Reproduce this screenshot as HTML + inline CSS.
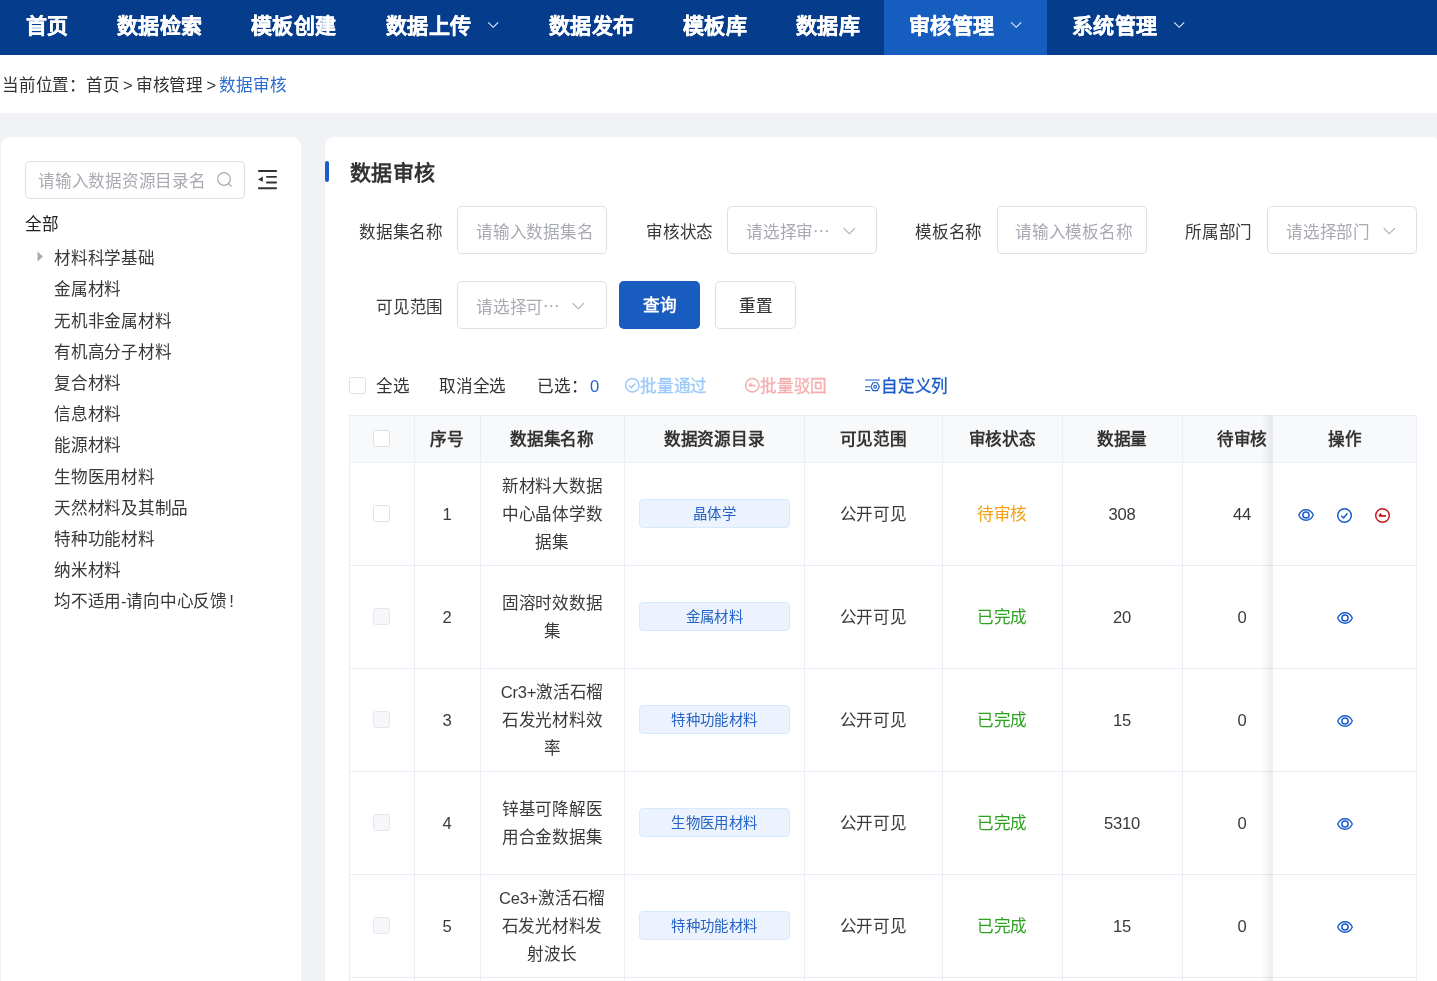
<!DOCTYPE html>
<html lang="zh-CN">
<head>
<meta charset="utf-8">
<style>
*{box-sizing:border-box;margin:0;padding:0}
html,body{width:1437px;height:981px;overflow:hidden}
body{position:relative;background:#f0f2f5;font-family:"Liberation Sans",sans-serif;color:#333;letter-spacing:-0.25px}
.a{position:absolute;white-space:nowrap}
.nav{position:absolute;left:0;top:0;width:1437px;height:55px;background:#063c8c}
.it{position:absolute;top:0;height:55px;line-height:52px;color:#fff;font-size:21px;font-weight:bold;white-space:nowrap;letter-spacing:0.4px;-webkit-text-stroke:0.35px #fff}
.crumb{position:absolute;left:0;top:55px;width:1437px;height:58px;background:#fff}
.panel{position:absolute;background:#fff;border-radius:9px}
.t{font-size:16.6px;line-height:30px}
.tree{color:#383838}
.inp{position:absolute;border:1px solid #dcdfe6;border-radius:4.8px;background:#fff}
.ph{color:#a8abb2}
.lbl{color:#383838}
.btn{position:absolute;border-radius:4.8px;font-size:16.6px;font-weight:bold;text-align:center;line-height:50px}
.vl{position:absolute;width:1px;background:#ebeef5}
.hl{position:absolute;height:1px;background:#ebeef5}
.cell{position:absolute;text-align:center;font-size:16.6px;color:#3a3a3a;display:flex;align-items:center;justify-content:center;padding-top:2.6px;line-height:27.8px}
.hcell{position:absolute;text-align:center;font-size:16.6px;color:#333;font-weight:bold;line-height:49px;white-space:nowrap}
.tag{position:absolute;left:639px;width:151px;height:29px;border:1px solid #d9e9fc;background:#ecf3fe;border-radius:4px;color:#2563c4;font-size:14.4px;line-height:28px;text-align:center;white-space:nowrap;letter-spacing:0.4px}
.cb{position:absolute;width:16.8px;height:16.8px;border:1px solid #dcdfe6;border-radius:2.4px;background:#fff}
.cbd{background:#f5f7fa;border-color:#e4e7ed}
.a,.it,.btn,.cell,.hcell,.tag{will-change:transform}
</style>
</head>
<body>
<div class="nav"></div>
<div class="a" style="left:884px;top:0;width:163px;height:55px;background:#165dc0"></div>
<div class="it" style="left:25.5px">首页</div>
<div class="it" style="left:116.5px">数据检索</div>
<div class="it" style="left:250.5px">模板创建</div>
<div class="it" style="left:385.5px">数据上传</div>
<div class="it" style="left:548.5px">数据发布</div>
<div class="it" style="left:682.5px">模板库</div>
<div class="it" style="left:795.5px">数据库</div>
<div class="it" style="left:908.5px">审核管理</div>
<div class="it" style="left:1071.5px">系统管理</div>
<svg class="a" style="left:487px;top:21px" width="13" height="9" viewBox="0 0 13 9"><path d="M1.2 1.3 L6.2 6.3 L11.2 1.3" fill="none" stroke="#fff" stroke-opacity="0.9" stroke-width="1.15"/></svg>
<svg class="a" style="left:1010px;top:21px" width="13" height="9" viewBox="0 0 13 9"><path d="M1.2 1.3 L6.2 6.3 L11.2 1.3" fill="none" stroke="#fff" stroke-opacity="0.9" stroke-width="1.15"/></svg>
<svg class="a" style="left:1173px;top:21px" width="13" height="9" viewBox="0 0 13 9"><path d="M1.2 1.3 L6.2 6.3 L11.2 1.3" fill="none" stroke="#fff" stroke-opacity="0.9" stroke-width="1.15"/></svg>
<div class="crumb"></div>
<div class="a t" style="left:2px;top:71px;color:#333">当前位置：首页<span style="letter-spacing:-0.8px"> &gt; </span>审核管理<span style="letter-spacing:-0.8px"> &gt; </span><span style="color:#2a6bd0">数据审核</span></div>
<div class="panel" style="left:1px;top:137px;width:300px;height:900px"></div>
<div class="inp" style="left:25px;top:161px;width:220px;height:38px"></div>
<div class="a t ph" style="left:38px;top:167px">请输入数据资源目录名</div>
<svg class="a" style="left:216px;top:171px" width="17" height="17" viewBox="0 0 17 17"><circle cx="8" cy="8" r="6.3" fill="none" stroke="#a8abb2" stroke-width="1.2"/><path d="M12.5 12.5 L15.5 15.5" stroke="#a8abb2" stroke-width="1.2"/></svg>
<svg class="a" style="left:258px;top:169px" width="20" height="21" viewBox="0 0 20 21"><g fill="#333"><rect x="0" y="1" width="19" height="2" rx="0.8"/><rect x="8" y="6.9" width="11" height="1.8" rx="0.8"/><rect x="8" y="12.6" width="11" height="1.8" rx="0.8"/><rect x="0" y="18.2" width="19" height="2" rx="0.8"/><path d="M0 10.5 L4.8 7.6 L4.8 12.8 Z"/></g></svg>
<div class="a t" style="left:25px;top:210px;color:#222">全部</div>
<svg class="a" style="left:37px;top:251px" width="7" height="11" viewBox="0 0 7 11"><path d="M0.5 0.5 L6 5.5 L0.5 10.5 Z" fill="#a8abb2"/></svg>
<div class="a t tree" style="left:54px;top:244.2px">材料科学基础</div>
<div class="a t tree" style="left:54px;top:275.4px">金属材料</div>
<div class="a t tree" style="left:54px;top:306.6px">无机非金属材料</div>
<div class="a t tree" style="left:54px;top:337.8px">有机高分子材料</div>
<div class="a t tree" style="left:54px;top:369.0px">复合材料</div>
<div class="a t tree" style="left:54px;top:400.2px">信息材料</div>
<div class="a t tree" style="left:54px;top:431.4px">能源材料</div>
<div class="a t tree" style="left:54px;top:462.6px">生物医用材料</div>
<div class="a t tree" style="left:54px;top:493.8px">天然材料及其制品</div>
<div class="a t tree" style="left:54px;top:525.0px">特种功能材料</div>
<div class="a t tree" style="left:54px;top:556.2px">纳米材料</div>
<div class="a t tree" style="left:54px;top:587.4px">均不适用-请向中心反馈<span style="margin-left:2.5px">!</span></div>
<div class="panel" style="left:325px;top:137px;width:1115px;height:900px"></div>
<div class="a" style="left:325px;top:161px;width:4px;height:21px;background:#1a5cc8;border-radius:2px"></div>
<div class="a" style="left:350px;top:158px;font-size:21px;line-height:30px;font-weight:bold;color:#333;letter-spacing:0.45px">数据审核</div>
<div class="a t lbl" style="left:359px;top:217.5px">数据集名称</div>
<div class="inp" style="left:457px;top:206px;width:150px;height:48px"></div>
<div class="a t ph" style="left:476px;top:217.5px">请输入数据集名</div>
<div class="a t lbl" style="left:646px;top:217.5px">审核状态</div>
<div class="inp" style="left:727px;top:206px;width:150px;height:48px"></div>
<div class="a t ph" style="left:746px;top:217.5px">请选择审⋯</div>
<svg class="a" style="left:843px;top:227px" width="13" height="9" viewBox="0 0 13 9"><path d="M0.7 1.2 L6.3 6.8 L11.9 1.2" fill="none" stroke="#a8abb2" stroke-width="1.1"/></svg>
<div class="a t lbl" style="left:915px;top:217.5px">模板名称</div>
<div class="inp" style="left:997px;top:206px;width:150px;height:48px"></div>
<div class="a t ph" style="left:1015px;top:217.5px">请输入模板名称</div>
<div class="a t lbl" style="left:1185px;top:217.5px">所属部门</div>
<div class="inp" style="left:1267px;top:206px;width:150px;height:48px"></div>
<div class="a t ph" style="left:1286px;top:217.5px">请选择部门</div>
<svg class="a" style="left:1383px;top:227px" width="13" height="9" viewBox="0 0 13 9"><path d="M0.7 1.2 L6.3 6.8 L11.9 1.2" fill="none" stroke="#a8abb2" stroke-width="1.1"/></svg>
<div class="a t lbl" style="left:376px;top:292.5px">可见范围</div>
<div class="inp" style="left:457px;top:281px;width:150px;height:48px"></div>
<div class="a t ph" style="left:476px;top:292.5px">请选择可⋯</div>
<svg class="a" style="left:572px;top:302px" width="13" height="9" viewBox="0 0 13 9"><path d="M0.7 1.2 L6.3 6.8 L11.9 1.2" fill="none" stroke="#a8abb2" stroke-width="1.1"/></svg>
<div class="btn" style="left:619px;top:281px;width:81px;height:48px;background:#185cc0;color:#fff">查询</div>
<div class="btn" style="left:715px;top:281px;width:81px;height:48px;border:1px solid #dcdfe6;color:#333;background:#fff;font-weight:400;-webkit-text-stroke:0.2px #333">重置</div>
<div class="cb" style="left:349px;top:377px"></div>
<div class="a t" style="left:376px;top:372px;color:#333">全选</div>
<div class="a t" style="left:439px;top:372px;color:#333">取消全选</div>
<div class="a t" style="left:537px;top:372px;color:#333">已选：</div>
<div class="a t" style="left:590px;top:372px;color:#2563c4">0</div>
<svg class="a" style="left:624px;top:377px" width="17" height="17" viewBox="0 0 17 17"><circle cx="8.3" cy="8.3" r="6.7" fill="none" stroke="#9ccafa" stroke-width="1.5"/><path d="M5 8.5 L7.3 10.6 L11.3 6.4" fill="none" stroke="#9ccafa" stroke-width="1.5"/></svg>
<div class="a t" style="left:640px;top:372px;color:#9ccafa;-webkit-text-stroke:0.3px #9ccafa">批量通过</div>
<svg class="a" style="left:744px;top:377px" width="17" height="17" viewBox="0 0 17 17"><circle cx="8.3" cy="8.3" r="6.7" fill="none" stroke="#f4aeb0" stroke-width="1.5"/><path d="M4.9 8.7 L11.4 8.7 M5 8.7 L7.4 6.3" fill="none" stroke="#f4aeb0" stroke-width="1.8"/></svg>
<div class="a t" style="left:760px;top:372px;color:#f4aeb0;-webkit-text-stroke:0.3px #f4aeb0">批量驳回</div>
<svg class="a" style="left:864px;top:378px" width="17" height="15" viewBox="0 0 17 15"><g fill="none" stroke="#1a5cc8" stroke-width="1.1"><path d="M1 2 H15.7 M1 8.7 H6 M1 12.5 H6"/><path d="M6.9 8.7 L9 4.8 H13.3 L15.4 8.7 L13.3 12.6 H9 Z"/><circle cx="11.15" cy="8.7" r="1.4"/></g></svg>
<div class="a t" style="left:881px;top:372px;color:#1a5cc8;-webkit-text-stroke:0.3px #1a5cc8">自定义列</div>
<div class="a" style="left:349px;top:415px;width:1068px;height:47px;background:#f8f9fb"></div>
<div class="hcell" style="left:414px;top:415px;width:66px;height:47px">序号</div>
<div class="hcell" style="left:480px;top:415px;width:144px;height:47px">数据集名称</div>
<div class="hcell" style="left:624px;top:415px;width:180px;height:47px">数据资源目录</div>
<div class="hcell" style="left:804px;top:415px;width:138px;height:47px">可见范围</div>
<div class="hcell" style="left:942px;top:415px;width:120px;height:47px">审核状态</div>
<div class="hcell" style="left:1062px;top:415px;width:120px;height:47px">数据量</div>
<div class="hcell" style="left:1182px;top:415px;width:120px;height:47px">待审核</div>
<div class="cb" style="left:373px;top:430px"></div>
<div class="cb" style="left:373px;top:505.1px"></div>
<div class="cell" style="left:414px;top:462px;width:66px;height:103px;"><div>1</div></div>
<div class="cell" style="left:480px;top:462px;width:144px;height:103px;line-height:27.8px"><div>新材料大数据<br>中心晶体学数<br>据集</div></div>
<div class="tag" style="top:499.0px">晶体学</div>
<div class="cell" style="left:804px;top:462px;width:138px;height:103px;"><div>公开可见</div></div>
<div class="cell" style="left:942px;top:462px;width:120px;height:103px;color:#f4a012"><div>待审核</div></div>
<div class="cell" style="left:1062px;top:462px;width:120px;height:103px;"><div>308</div></div>
<div class="cell" style="left:1182px;top:462px;width:120px;height:103px;"><div>44</div></div>
<div class="cb cbd" style="left:373px;top:608.1px"></div>
<div class="cell" style="left:414px;top:565px;width:66px;height:103px;"><div>2</div></div>
<div class="cell" style="left:480px;top:565px;width:144px;height:103px;line-height:27.8px"><div>固溶时效数据<br>集</div></div>
<div class="tag" style="top:602.0px">金属材料</div>
<div class="cell" style="left:804px;top:565px;width:138px;height:103px;"><div>公开可见</div></div>
<div class="cell" style="left:942px;top:565px;width:120px;height:103px;color:#2ea121"><div>已完成</div></div>
<div class="cell" style="left:1062px;top:565px;width:120px;height:103px;"><div>20</div></div>
<div class="cell" style="left:1182px;top:565px;width:120px;height:103px;"><div>0</div></div>
<div class="cb cbd" style="left:373px;top:711.1px"></div>
<div class="cell" style="left:414px;top:668px;width:66px;height:103px;"><div>3</div></div>
<div class="cell" style="left:480px;top:668px;width:144px;height:103px;line-height:27.8px"><div>Cr3+激活石榴<br>石发光材料效<br>率</div></div>
<div class="tag" style="top:705.0px">特种功能材料</div>
<div class="cell" style="left:804px;top:668px;width:138px;height:103px;"><div>公开可见</div></div>
<div class="cell" style="left:942px;top:668px;width:120px;height:103px;color:#2ea121"><div>已完成</div></div>
<div class="cell" style="left:1062px;top:668px;width:120px;height:103px;"><div>15</div></div>
<div class="cell" style="left:1182px;top:668px;width:120px;height:103px;"><div>0</div></div>
<div class="cb cbd" style="left:373px;top:814.1px"></div>
<div class="cell" style="left:414px;top:771px;width:66px;height:103px;"><div>4</div></div>
<div class="cell" style="left:480px;top:771px;width:144px;height:103px;line-height:27.8px"><div>锌基可降解医<br>用合金数据集</div></div>
<div class="tag" style="top:808.0px">生物医用材料</div>
<div class="cell" style="left:804px;top:771px;width:138px;height:103px;"><div>公开可见</div></div>
<div class="cell" style="left:942px;top:771px;width:120px;height:103px;color:#2ea121"><div>已完成</div></div>
<div class="cell" style="left:1062px;top:771px;width:120px;height:103px;"><div>5310</div></div>
<div class="cell" style="left:1182px;top:771px;width:120px;height:103px;"><div>0</div></div>
<div class="cb cbd" style="left:373px;top:917.1px"></div>
<div class="cell" style="left:414px;top:874px;width:66px;height:103px;"><div>5</div></div>
<div class="cell" style="left:480px;top:874px;width:144px;height:103px;line-height:27.8px"><div>Ce3+激活石榴<br>石发光材料发<br>射波长</div></div>
<div class="tag" style="top:911.0px">特种功能材料</div>
<div class="cell" style="left:804px;top:874px;width:138px;height:103px;"><div>公开可见</div></div>
<div class="cell" style="left:942px;top:874px;width:120px;height:103px;color:#2ea121"><div>已完成</div></div>
<div class="cell" style="left:1062px;top:874px;width:120px;height:103px;"><div>15</div></div>
<div class="cell" style="left:1182px;top:874px;width:120px;height:103px;"><div>0</div></div>
<div class="hl" style="left:349px;top:415px;width:1068px"></div>
<div class="hl" style="left:349px;top:462px;width:1068px"></div>
<div class="hl" style="left:349px;top:565px;width:1068px"></div>
<div class="hl" style="left:349px;top:668px;width:1068px"></div>
<div class="hl" style="left:349px;top:771px;width:1068px"></div>
<div class="hl" style="left:349px;top:874px;width:1068px"></div>
<div class="hl" style="left:349px;top:977px;width:1068px"></div>
<div class="vl" style="left:349px;top:415px;height:600px"></div>
<div class="vl" style="left:414px;top:415px;height:600px"></div>
<div class="vl" style="left:480px;top:415px;height:600px"></div>
<div class="vl" style="left:624px;top:415px;height:600px"></div>
<div class="vl" style="left:804px;top:415px;height:600px"></div>
<div class="vl" style="left:942px;top:415px;height:600px"></div>
<div class="vl" style="left:1062px;top:415px;height:600px"></div>
<div class="vl" style="left:1182px;top:415px;height:600px"></div>
<div class="a" style="left:1261px;top:415px;width:12px;height:600px;background:linear-gradient(to right,rgba(0,0,0,0),rgba(0,0,0,0.07))"></div>
<div class="a" style="left:1273px;top:415px;width:143px;height:600px;background:#fff"></div>
<div class="a" style="left:1273px;top:415px;width:143px;height:47px;background:#f8f9fb"></div>
<div class="hcell" style="left:1273px;top:415px;width:143px;height:47px">操作</div>
<div class="hl" style="left:1273px;top:415px;width:144px"></div>
<div class="hl" style="left:1273px;top:462px;width:144px"></div>
<div class="hl" style="left:1273px;top:565px;width:144px"></div>
<div class="hl" style="left:1273px;top:668px;width:144px"></div>
<div class="hl" style="left:1273px;top:771px;width:144px"></div>
<div class="hl" style="left:1273px;top:874px;width:144px"></div>
<div class="hl" style="left:1273px;top:977px;width:144px"></div>
<div class="vl" style="left:1416px;top:415px;height:600px"></div>
<svg class="a" style="left:1297.3px;top:507.5px" width="18" height="14" viewBox="0 0 18 14"><path d="M1.7 7 C3.4 3.2 5.9 1.8 9 1.8 S14.6 3.2 16.3 7 C14.6 10.8 12.1 12.2 9 12.2 S3.4 10.8 1.7 7 Z" fill="none" stroke="#1a5cc8" stroke-width="1.35"/><circle cx="9" cy="7" r="3.1" fill="none" stroke="#1a5cc8" stroke-width="1.5"/></svg>
<svg class="a" style="left:1336px;top:506.5px" width="17" height="17" viewBox="0 0 17 17"><circle cx="8.5" cy="8.5" r="6.8" fill="none" stroke="#1a5cc8" stroke-width="1.5"/><path d="M5.2 8.8 L7.6 10.9 L11.4 6.2" fill="none" stroke="#1a5cc8" stroke-width="1.5"/></svg>
<svg class="a" style="left:1374px;top:506.5px" width="17" height="17" viewBox="0 0 17 17"><circle cx="8.5" cy="8.5" r="6.8" fill="none" stroke="#c8161d" stroke-width="1.5"/><path d="M4.8 8.9 H12 M4.9 8.9 L7.4 6.6" fill="none" stroke="#c8161d" stroke-width="1.6"/></svg>
<svg class="a" style="left:1335.5px;top:610.5px" width="18" height="14" viewBox="0 0 18 14"><path d="M1.7 7 C3.4 3.2 5.9 1.8 9 1.8 S14.6 3.2 16.3 7 C14.6 10.8 12.1 12.2 9 12.2 S3.4 10.8 1.7 7 Z" fill="none" stroke="#1a5cc8" stroke-width="1.35"/><circle cx="9" cy="7" r="3.1" fill="none" stroke="#1a5cc8" stroke-width="1.5"/></svg>
<svg class="a" style="left:1335.5px;top:713.5px" width="18" height="14" viewBox="0 0 18 14"><path d="M1.7 7 C3.4 3.2 5.9 1.8 9 1.8 S14.6 3.2 16.3 7 C14.6 10.8 12.1 12.2 9 12.2 S3.4 10.8 1.7 7 Z" fill="none" stroke="#1a5cc8" stroke-width="1.35"/><circle cx="9" cy="7" r="3.1" fill="none" stroke="#1a5cc8" stroke-width="1.5"/></svg>
<svg class="a" style="left:1335.5px;top:816.5px" width="18" height="14" viewBox="0 0 18 14"><path d="M1.7 7 C3.4 3.2 5.9 1.8 9 1.8 S14.6 3.2 16.3 7 C14.6 10.8 12.1 12.2 9 12.2 S3.4 10.8 1.7 7 Z" fill="none" stroke="#1a5cc8" stroke-width="1.35"/><circle cx="9" cy="7" r="3.1" fill="none" stroke="#1a5cc8" stroke-width="1.5"/></svg>
<svg class="a" style="left:1335.5px;top:919.5px" width="18" height="14" viewBox="0 0 18 14"><path d="M1.7 7 C3.4 3.2 5.9 1.8 9 1.8 S14.6 3.2 16.3 7 C14.6 10.8 12.1 12.2 9 12.2 S3.4 10.8 1.7 7 Z" fill="none" stroke="#1a5cc8" stroke-width="1.35"/><circle cx="9" cy="7" r="3.1" fill="none" stroke="#1a5cc8" stroke-width="1.5"/></svg>
</body>
</html>
